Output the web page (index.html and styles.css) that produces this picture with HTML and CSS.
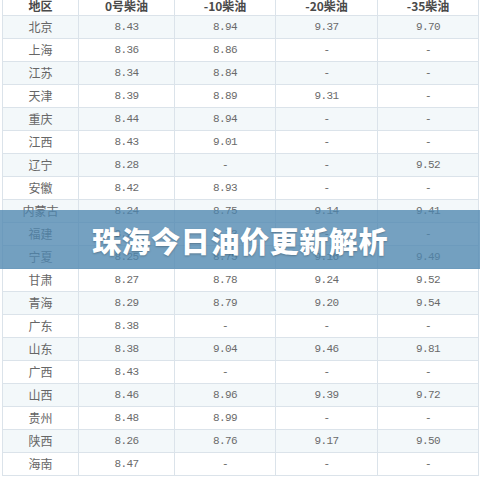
FILE: index.html
```html
<!DOCTYPE html>
<html lang="zh">
<head>
<meta charset="utf-8">
<link rel="stylesheet" href="styles.css">
</head>
<body>
<div class="page">
  <table class="price-table">
    <thead>
      <tr><th>地区</th><th>0号柴油</th><th>-10柴油</th><th>-20柴油</th><th>-35柴油</th></tr>
    </thead>
    <tbody>
      <tr><td>北京</td><td>8.43</td><td>8.94</td><td>9.37</td><td>9.70</td></tr>
      <tr><td>上海</td><td>8.36</td><td>8.86</td><td>-</td><td>-</td></tr>
      <tr><td>江苏</td><td>8.34</td><td>8.84</td><td>-</td><td>-</td></tr>
      <tr><td>天津</td><td>8.39</td><td>8.89</td><td>9.31</td><td>-</td></tr>
      <tr><td>重庆</td><td>8.44</td><td>8.94</td><td>-</td><td>-</td></tr>
      <tr><td>江西</td><td>8.43</td><td>9.01</td><td>-</td><td>-</td></tr>
      <tr><td>辽宁</td><td>8.28</td><td>-</td><td>-</td><td>9.52</td></tr>
      <tr><td>安徽</td><td>8.42</td><td>8.93</td><td>-</td><td>-</td></tr>
      <tr><td>内蒙古</td><td>8.24</td><td>8.75</td><td>9.14</td><td>9.41</td></tr>
      <tr><td>福建</td><td>8.23</td><td>8.73</td><td>-</td><td>-</td></tr>
      <tr><td>宁夏</td><td>8.25</td><td>8.75</td><td>9.16</td><td>9.49</td></tr>
      <tr><td>甘肃</td><td>8.27</td><td>8.78</td><td>9.24</td><td>9.52</td></tr>
      <tr><td>青海</td><td>8.29</td><td>8.79</td><td>9.20</td><td>9.54</td></tr>
      <tr><td>广东</td><td>8.38</td><td>-</td><td>-</td><td>-</td></tr>
      <tr><td>山东</td><td>8.38</td><td>9.04</td><td>9.46</td><td>9.81</td></tr>
      <tr><td>广西</td><td>8.43</td><td>-</td><td>-</td><td>-</td></tr>
      <tr><td>山西</td><td>8.46</td><td>8.96</td><td>9.39</td><td>9.72</td></tr>
      <tr><td>贵州</td><td>8.48</td><td>8.99</td><td>-</td><td>-</td></tr>
      <tr><td>陕西</td><td>8.26</td><td>8.76</td><td>9.17</td><td>9.50</td></tr>
      <tr><td>海南</td><td>8.47</td><td>-</td><td>-</td><td>-</td></tr>
    </tbody>
  </table>
  <div class="banner"><h1 class="banner-title">珠海今日油价更新解析</h1></div>
</div>
</body>
</html>
```
FILE: styles.css
```css
html, body {
  margin: 0;
  padding: 0;
  background: #ffffff;
}
.page {
  position: relative;
  width: 480px;
  height: 480px;
  overflow: hidden;
  padding-left: 2px;
  box-sizing: border-box;
}
.price-table {
  width: 477px;
  border-collapse: collapse;
  table-layout: fixed;
  font-family: "Noto Sans CJK SC", "Liberation Sans", sans-serif;
  font-size: 12px;
  color: #666;
}
.price-table th:nth-child(1) { width: 76px; }
.price-table th:nth-child(2) { width: 96px; }
.price-table th:nth-child(3) { width: 101px; }
.price-table th:nth-child(4) { width: 102px; }
.price-table th,
.price-table td {
  border: 1px solid #dbe3ea;
  text-align: center;
  padding: 0;
}
.price-table th {
  height: 15px;
  line-height: 11px;
  padding-bottom: 4px;
  box-sizing: border-box;
  font-weight: bold;
  color: #4a4a4a;
  border-top: none;
}
.price-table td {
  height: 22px;
  line-height: 22px;
}
.price-table td + td {
  font-family: "Liberation Mono", "DejaVu Sans Mono", monospace;
  font-size: 11px;
  letter-spacing: -0.6px;
  color: #6a6a6a;
}
.price-table tbody tr:nth-child(odd) {
  background: #f3f8fa;
}
.banner {
  position: absolute;
  left: 0;
  top: 210px;
  width: 480px;
  height: 59px;
  background: rgba(78, 135, 175, 0.78);
  display: flex;
  align-items: center;
  justify-content: center;
}
.banner-title {
  margin: 0;
  font-family: "Noto Sans CJK SC", sans-serif;
  font-size: 29px;
  font-weight: 900;
  color: #ffffff;
  letter-spacing: 0.6px;
  text-shadow: 0 1px 2px rgba(0, 0, 0, 0.25);
}
```
